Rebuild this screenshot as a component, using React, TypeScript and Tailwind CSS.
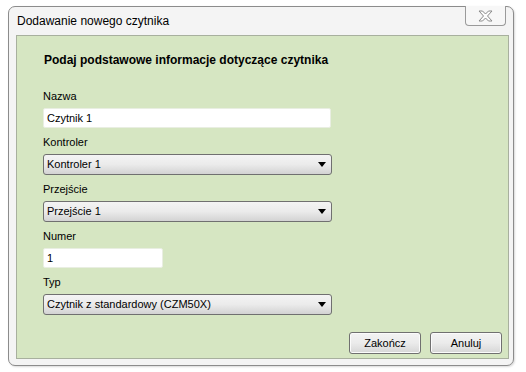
import React from "react";

const font = { fontFamily: '"Liberation Sans", Arial, sans-serif' };

const Label = ({ text }: { text: string }) => (
  <div className="mt-[7px] text-[11px] leading-[14px] text-black">{text}</div>
);

const TextBox = ({ value, width }: { value: string; width: string }) => (
  <div
    className={`mt-[5px] h-[20px] ${width} bg-white border border-[#e9eee2] rounded-[2px] flex items-center pl-[3px] text-[11px] text-black`}
  >
    {value}
  </div>
);

const Select = ({ value }: { value: string }) => (
  <div className="mt-[5px] h-[21px] w-[289px] rounded-[3px] border border-[#707070] bg-gradient-to-b from-[#f4f4f4] via-[#ebebeb] to-[#d3d3d3] flex items-center justify-between pl-[3px] pr-[5px] text-[11px] text-black">
    <span>{value}</span>
    <svg width="8" height="5" viewBox="0 0 8 5">
      <path d="M0 0 H8 L4 5 Z" fill="#000" />
    </svg>
  </div>
);

const Button = ({ text }: { text: string }) => (
  <div className="h-[22px] w-[72px] rounded-[3px] border border-[#707070] bg-gradient-to-b from-[#f3f3f3] via-[#ebebeb] to-[#d6d6d6] flex items-center justify-center text-[11px] text-black shadow-[inset_0_0_0_1px_#fbfbfb]">
    {text}
  </div>
);

export default function App() {
  return (
    <div className="w-[526px] h-[372px] bg-white pt-[6px] pl-[8px]" style={font}>
      <div className="w-[506px] h-[360px] rounded-[7px] border border-[#8c8c8c] bg-[#f4f4f4] flex flex-col pl-[7px] pr-[4px] pb-[6px] shadow-[1px_1px_2px_rgba(0,0,0,0.15)]">
        {/* title bar */}
        <div className="h-[28px] flex items-start justify-between">
          <div className="pt-[7px] pl-[1px] text-[12px] leading-[15px] text-black">
            Dodawanie nowego czytnika
          </div>
          <div className="mt-[-1px] mr-[3px] w-[41px] h-[20px] rounded-b-[4px] border border-t-0 border-[#9a9a9a] bg-[#f7f7f7] flex items-center justify-center">
            <svg width="15" height="12" viewBox="0 0 15 12">
              <path
                d="M1 1 H4.5 L7.5 4 L10.5 1 H14 L9.5 6 L14 11 H10.5 L7.5 8 L4.5 11 H1 L5.5 6 Z"
                fill="#fdfdfd"
                stroke="#8a8a8a"
                strokeWidth="1"
                strokeLinejoin="round"
              />
            </svg>
          </div>
        </div>
        {/* content panel */}
        <div className="flex-1 border border-[#a8b09e] bg-[#d6e6c2] flex flex-col pl-[26px] pt-[17px]">
          <div className="ml-[1px] text-[12px] leading-[14px] font-bold text-black">
            Podaj podstawowe informacje dotyczące czytnika
          </div>
          <div className="mt-[15px]" />
          <Label text="Nazwa" />
          <TextBox value="Czytnik 1" width="w-[288px]" />
          <Label text="Kontroler" />
          <Select value="Kontroler 1" />
          <Label text="Przejście" />
          <Select value="Przejście 1" />
          <Label text="Numer" />
          <TextBox value="1" width="w-[120px]" />
          <Label text="Typ" />
          <Select value="Czytnik z standardowy (CZM50X)" />
          <div className="flex-1" />
          <div className="flex justify-end gap-[9px] pr-[6px] pb-[4px]">
            <Button text="Zakończ" />
            <Button text="Anuluj" />
          </div>
        </div>
      </div>
    </div>
  );
}
